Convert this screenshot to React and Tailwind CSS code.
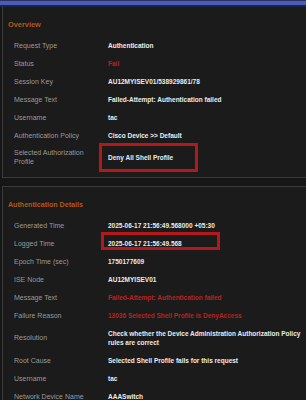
const overview = [
  { label: "Request Type", value: "Authentication" },
  { label: "Status", value: "Fail", red: true },
  { label: "Session Key", value: "AU12MYISEV01/538929861/78" },
  { label: "Message Text", value: "Failed-Attempt: Authentication failed" },
  { label: "Username", value: "tac" },
  { label: "Authentication Policy", value: "Cisco Device >> Default" },
];

const details = [
  { label: "Generated Time", value: "2025-06-17 21:56:49.568000 +05:30" },
  { label: "Logged Time", value: "2025-06-17 21:56:49.568", boxed: true },
  { label: "Epoch Time (sec)", value: "1750177609" },
  { label: "ISE Node", value: "AU12MYISEV01" },
  { label: "Message Text", value: "Failed-Attempt: Authentication failed", red: true },
  { label: "Failure Reason", value: "13036 Selected Shell Profile is DenyAccess", red: true },
];

const details2 = [
  { label: "Root Cause", value: "Selected Shell Profile fails for this request" },
  { label: "Username", value: "tac" },
  { label: "Network Device Name", value: "AAASwitch" },
];

function Row({ label, value, red, boxed }) {
  return (
    <div className="flex h-[18px] items-center">
      <div className="w-[94px] shrink-0 text-[#9a9a9a]">{label}</div>
      <div className={`relative font-bold text-[6.5px] ${red ? "text-[#b8231f]" : "text-[#ececec]"}`}>
        {value}
        {boxed && (
          <span className="absolute left-[-7px] top-[-7px] h-[18px] w-[119px] border-[3px] border-[#b3191b]" />
        )}
      </div>
    </div>
  );
}

export default function App() {
  return (
    <div
      className="h-[400px] w-[306px] overflow-hidden bg-[#161616] text-[7px] leading-[9px]"
      style={{ fontFamily: '"Liberation Sans", Arial, sans-serif' }}
    >
      <div className="h-[1px] bg-[#2a3263]" />
      <div className="h-[4px] bg-[#4a5cb5]" />
      <div className="h-[2px] bg-[#1d2247]" />

      <div className="ml-[2px] w-[320px] border-x border-b border-[#3a3a3a] bg-[#1b1b1b] pl-[5px] pt-[12px] pb-[7px]">
        <div className="h-[12px] text-[7.4px] font-bold leading-[12px] text-[#b25813]">Overview</div>
        <div className="mt-[5px] pl-[6px]">
          {overview.map((r) => (
            <Row key={r.label} {...r} />
          ))}
          <div className="flex h-[26px] items-center">
            <div className="w-[94px] shrink-0 text-[#9a9a9a]">
              Selected Authorization
              <br />
              Profile
            </div>
            <div className="relative text-[6.5px] font-bold text-[#ececec]">
              Deny All Shell Profile
              <span className="absolute left-[-9px] top-[-10px] h-[29px] w-[99px] border-[3px] border-[#b3191b]" />
            </div>
          </div>
        </div>
      </div>

      <div className="ml-[2px] mt-[8px] w-[320px] border border-r-0 border-[#3a3a3a] bg-[#1b1b1b] pl-[5px] pt-[12px]">
        <div className="h-[12px] text-[7.1px] font-bold leading-[12px] text-[#b25813]">Authentication Details</div>
        <div className="mt-[5px] pl-[6px]">
          {details.map((r) => (
            <Row key={r.label} {...r} />
          ))}
          <div className="flex h-[27px] items-center">
            <div className="w-[94px] shrink-0 text-[#9a9a9a]">Resolution</div>
            <div className="text-[6.5px] font-bold text-[#ececec]">
              Check whether the Device Administration Authorization Policy
              <br />
              rules are correct
            </div>
          </div>
          {details2.map((r) => (
            <Row key={r.label + "2"} {...r} />
          ))}
        </div>
      </div>
    </div>
  );
}
